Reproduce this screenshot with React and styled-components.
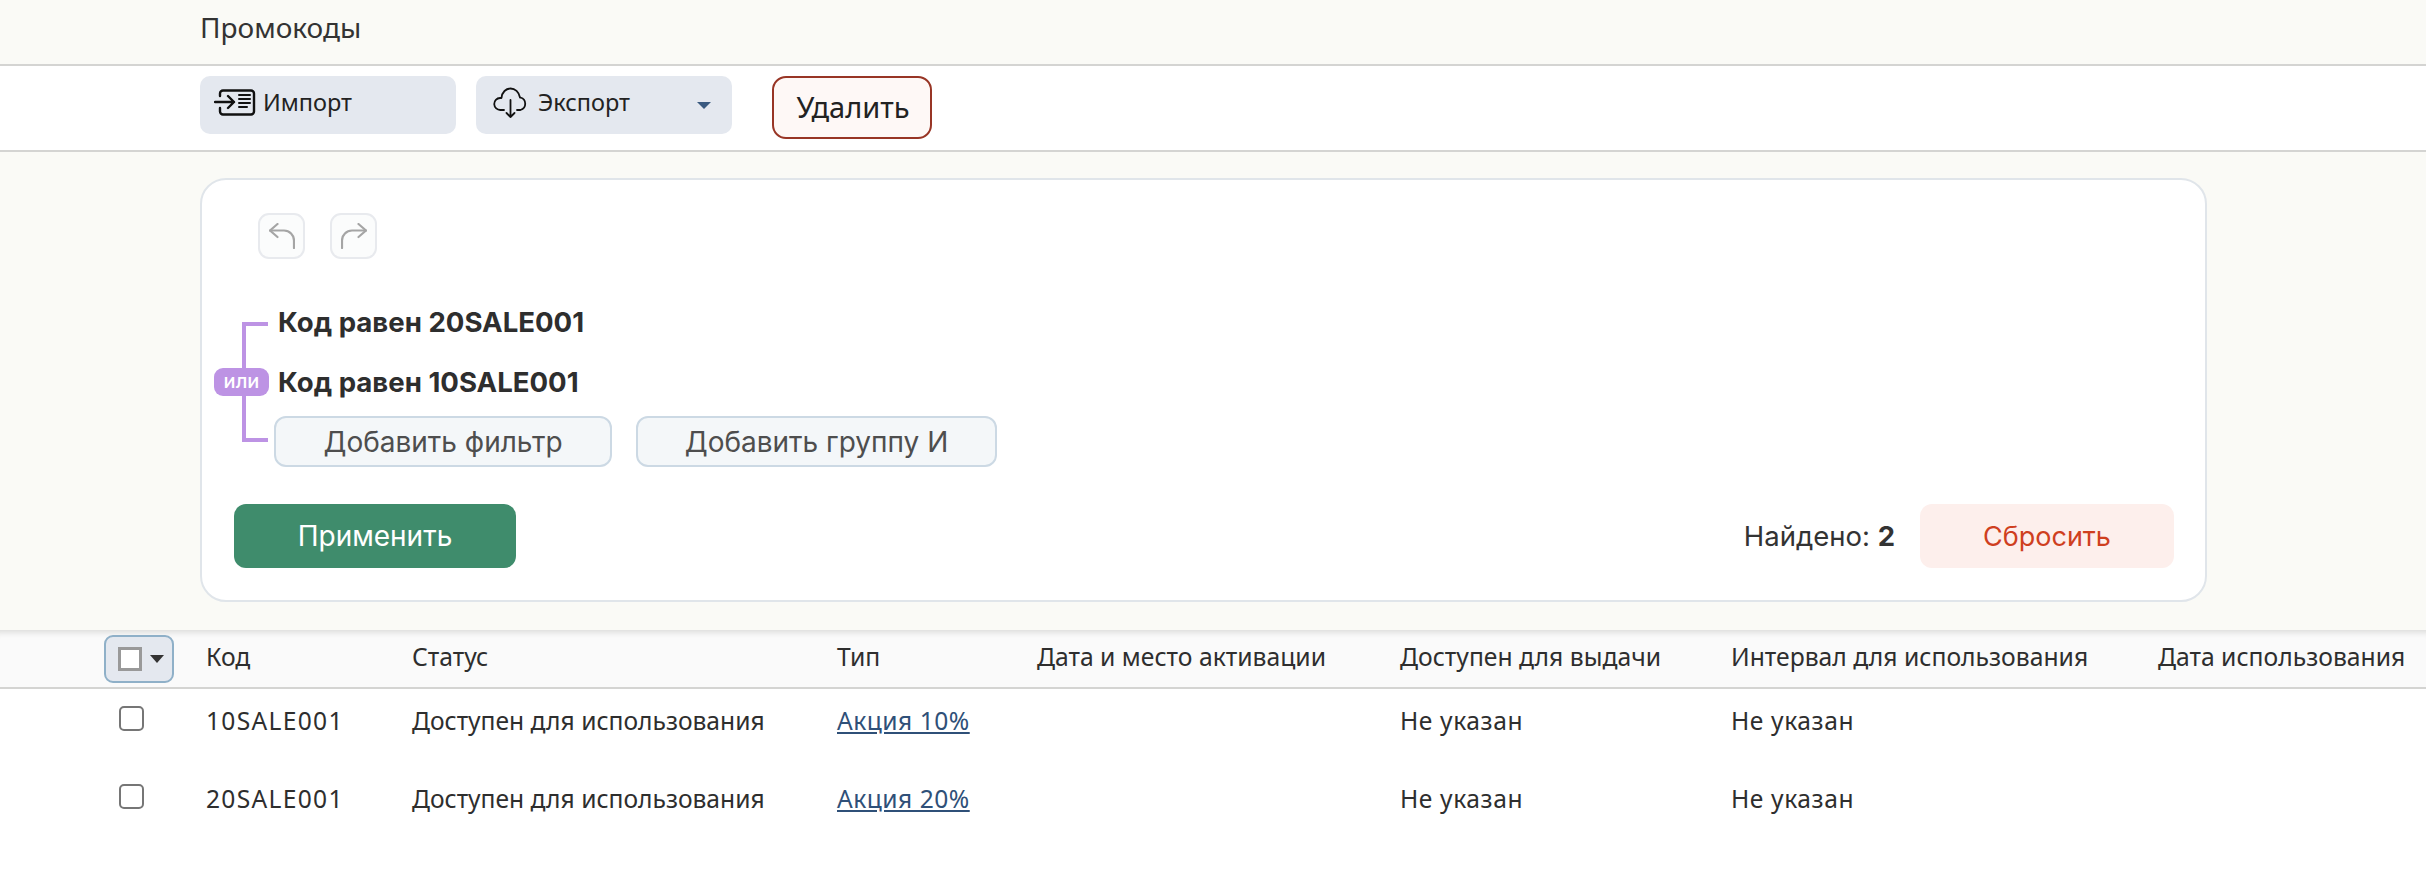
import React from "react";
import styled, { createGlobalStyle } from "styled-components";

const Global = createGlobalStyle`
  html, body { margin: 0; padding: 0; background: #fff; }
  body { font-family: "Noto Sans", "Liberation Sans", sans-serif; color: #2e2e2e; }
  * { box-sizing: border-box; }
`;

const Page = styled.div`width: 2426px; min-height: 878px; background: #fff; overflow: hidden;`;

const TitleBar = styled.header`
  height: 66px; padding: 0 0 11px 200px; display: flex; align-items: center;
  background: #fafaf6; border-bottom: 2px solid #d4d4d2;
`;
const Title = styled.h1`margin: 0; font-size: 28px; font-weight: 400; color: #333; line-height: 36px;`;

const Toolbar = styled.div`
  height: 86px; padding: 10px 0 0 200px; display: flex; align-items: flex-start; gap: 20px;
  background: #fff; border-bottom: 2px solid #d4d4d2;
`;
const ToolButton = styled.button`
  width: ${p => p.$w}px; height: 58px; padding: 0 0 6px ${p => p.$pl}px; border: 0; border-radius: 10px;
  background: #e4e8ef; display: flex; align-items: center; gap: ${p => p.$gap}px;
  font: 400 23.500px "Noto Sans", sans-serif; color: #222;
`;
const Caret = styled.span`
  margin-left: auto; margin-right: 21px; margin-top: 6px; width: 0; height: 0;
  border-left: 7px solid transparent; border-right: 7px solid transparent; border-top: 7px solid #3a5a80;
`;
const DeleteButton = styled.button`
  margin-left: 20px; width: 160px; height: 63px; border: 2px solid #983525; border-radius: 14px;
  background: #fef8f6; font: 400 29px/54px "Noto Sans", sans-serif; color: #222; padding: 0 0 1px 2px;
`;

const FilterSection = styled.section`
  height: 478px; padding: 26px 0 0 200px; background: #fafaf6;
`;
const Card = styled.div`
  width: 2007px; height: 424px; padding: 33px 31px 31px 32px; background: #fff;
  border: 2px solid #e0e5ea; border-radius: 26px; display: flex; flex-direction: column;
`;
const History = styled.div`display: flex; gap: 25px; padding-left: 24px;`;
const HistoryButton = styled.button`
  width: 47px; height: 46px; padding: 0; display: flex; align-items: center; justify-content: center;
  background: #fbfcfc; border: 2px solid #e8eaee; border-radius: 11px;
`;
const Tree = styled.div`
  position: relative; margin-top: 33px; padding-left: 40px; display: flex; flex-direction: column;
`;
const Connector = styled.span`
  position: absolute; left: 8px; top: 30px; width: 26px; height: 120px;
  border: 4px solid #bd93e4; border-right: 0;
`;
const Badge = styled.span`
  position: absolute; left: -20px; top: 76px; width: 55px; height: 28px; border-radius: 9px;
  background: #bd93e4; color: #fff; font: 500 20px/27px Inter, sans-serif; text-align: center;
`;
const Rule = styled.div`
  height: 60px; display: flex; align-items: center; padding-left: 4px;
  font: 700 27.600px Inter, sans-serif; color: #2e2e2e;
`;
const TreeActions = styled.div`display: flex; gap: 24px; margin-top: 4px;`;
const AddButton = styled.button`
  width: ${p => p.$w}px; height: 51px; padding: 0; background: #f4f7f9;
  border: 2px solid #ccd9e4; border-radius: 12px;
  font: 400 28px Inter, sans-serif; color: #4e4e4e;
`;
const Actions = styled.div`display: flex; align-items: center; margin-top: 37px;`;
const ApplyButton = styled.button`
  width: 282px; height: 64px; padding: 0; border: 0; border-radius: 12px;
  background: #3f8c6c; color: #fff; font: 400 28px Inter, sans-serif;
`;
const Found = styled.div`margin-left: auto; margin-right: 25px; font: 400 27.500px Inter, sans-serif; color: #333;`;
const FoundCount = styled.b`font-weight: 700;`;
const ResetButton = styled.button`
  width: 254px; height: 64px; padding: 0; border: 0; border-radius: 12px;
  background: #fdefec; color: #cf3f1f; font: 400 27px Inter, sans-serif;
`;

const COLS = "102px 206px 425px 200px 363px 331px 427px 268px";
const TableHead = styled.div`
  display: grid; grid-template-columns: ${COLS}; height: 59px; padding-left: 104px; align-items: center;
  background: #fafafa; border-bottom: 2px solid #d4d4d2; box-shadow: inset 0 8px 6px -6px #d8d8d6;
  font-size: 24.700px; color: #2e2e2e; white-space: nowrap;
`;
const HeadCell = styled.div`padding-bottom: 5px;`;
const SelectAll = styled.div`
  width: 70px; height: 48px; display: flex; align-items: center; gap: 8px; padding-left: 12px;
  background: #e4e8ef; border: 2px solid #8fb0c8; border-radius: 9px;
`;
const SelectBox = styled.span`width: 24px; height: 24px; background: #fff; border: 3px solid #999;`;
const SelectCaret = styled.span`
  width: 0; height: 0; border-left: 7px solid transparent; border-right: 7px solid transparent; border-top: 8px solid #333;
`;
const Row = styled.div`
  display: grid; grid-template-columns: ${COLS}; height: 78px; padding: 0 0 16px 104px; align-items: center;
  font-size: 24.600px; color: #2e2e2e; white-space: nowrap;
`;
const RowCheck = styled.span`
  display: block; width: 25px; height: 25px; margin: 0 0 4px 15px; border: 2px solid #767676; border-radius: 5px; background: #fff;
`;
const CodeCell = styled.div`letter-spacing: 1.300px;`;
const NotSet = styled.div`letter-spacing: .6px;`;
const TypeLink = styled.a`color: #2f5078; text-decoration: underline; letter-spacing: .5px;`;

const ImportIcon = () => (
  <svg width="42" height="27" viewBox="0 0 42 27" fill="none" stroke="#111" strokeWidth="2.4" strokeLinecap="round" strokeLinejoin="round">
    <path d="M6 7V4.500a3 3 0 0 1 3-3h28a3 3 0 0 1 3 3v18a3 3 0 0 1-3 3H9a3 3 0 0 1-3-3V19" />
    <path d="M1 13h19M14 7l6 6-6 6" />
    <path d="M25 6h11M25 10h11M25 14h11M25 18h8" strokeWidth="2" />
  </svg>
);
const CloudIcon = () => (
  <svg width="36" height="31" viewBox="0 0 36 31" fill="none" stroke="#111" strokeWidth="1.800" strokeLinecap="round" strokeLinejoin="round">
    <path d="M11 23H7.500a6 6 0 0 1-.5-12h1.500C9 5 13 1.500 17.500 1.500S26 5 27 10.500h.5a6.500 6.500 0 0 1 0 12.500H24" />
    <path d="M17.500 13v17M13.500 26l4 4 4-4" />
  </svg>
);
const UndoIcon = () => (
  <svg width="26" height="26" viewBox="0 0 26 26" fill="none" stroke="#a5a5a5" strokeWidth="2.200" strokeLinecap="round" strokeLinejoin="round">
    <path d="M8.500 1 1 7.500 8.500 14" />
    <path d="M1 7.500h14a10 10 0 0 1 10 10V25" />
  </svg>
);
const RedoIcon = () => (
  <svg width="26" height="26" viewBox="0 0 26 26" fill="none" stroke="#a5a5a5" strokeWidth="2.200" strokeLinecap="round" strokeLinejoin="round">
    <path d="M17.500 1 25 7.500 17.500 14" />
    <path d="M25 7.500H11a10 10 0 0 0-10 10V25" />
  </svg>
);

const HEADERS = ["Код", "Статус", "Тип", "Дата и место активации", "Доступен для выдачи", "Интервал для использования", "Дата использования"];
const ROWS = [
  { code: "10SALE001", type: "Акция 10%" },
  { code: "20SALE001", type: "Акция 20%" },
];

export default function App() {
  return (
    <Page>
      <Global />
      <TitleBar><Title>Промокоды</Title></TitleBar>
      <Toolbar>
        <ToolButton $w={256} $pl={14} $gap={7}><ImportIcon />Импорт</ToolButton>
        <ToolButton $w={256} $pl={17} $gap={9}><CloudIcon />Экспорт<Caret /></ToolButton>
        <DeleteButton>Удалить</DeleteButton>
      </Toolbar>
      <FilterSection>
        <Card>
          <History>
            <HistoryButton><UndoIcon /></HistoryButton>
            <HistoryButton><RedoIcon /></HistoryButton>
          </History>
          <Tree>
            <Connector />
            <Badge>или</Badge>
            <Rule>Код равен 20SALE001</Rule>
            <Rule>Код равен 10SALE001</Rule>
            <TreeActions>
              <AddButton $w={338}>Добавить фильтр</AddButton>
              <AddButton $w={361}>Добавить группу И</AddButton>
            </TreeActions>
          </Tree>
          <Actions>
            <ApplyButton>Применить</ApplyButton>
            <Found>Найдено: <FoundCount>2</FoundCount></Found>
            <ResetButton>Сбросить</ResetButton>
          </Actions>
        </Card>
      </FilterSection>
      <TableHead>
        <SelectAll><SelectBox /><SelectCaret /></SelectAll>
        {HEADERS.map(h => <HeadCell key={h}>{h}</HeadCell>)}
      </TableHead>
      {ROWS.map(r => (
        <Row key={r.code}>
          <RowCheck />
          <CodeCell>{r.code}</CodeCell>
          <div>Доступен для использования</div>
          <TypeLink>{r.type}</TypeLink>
          <div />
          <NotSet>Не указан</NotSet>
          <NotSet>Не указан</NotSet>
          <div />
        </Row>
      ))}
    </Page>
  );
}
